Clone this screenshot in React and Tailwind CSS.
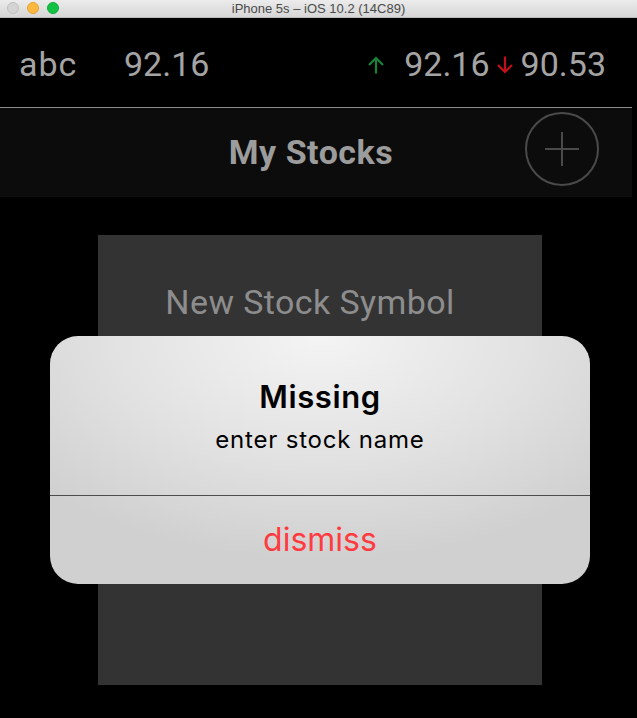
import React from "react";

const ArrowUp = ({ color }) => (
  <svg width="18" height="18" viewBox="0 0 18 18" fill="none" stroke={color} strokeWidth="2.2">
    <path d="M9 17.5V2" />
    <path d="M2 9l7-7 7 7" />
  </svg>
);

const ArrowDown = ({ color }) => (
  <svg width="18" height="18" viewBox="0 0 18 18" fill="none" stroke={color} strokeWidth="2.2">
    <path d="M9 0.5V16" />
    <path d="M2 9l7 7 7-7" />
  </svg>
);

export default function App() {
  return (
    <div className="relative w-[637px] h-[718px] bg-black overflow-hidden font-['Roboto',sans-serif]">
      {/* simulator title bar */}
      <div className="relative h-[18px] flex items-center justify-center bg-gradient-to-b from-[#ececec] to-[#d6d6d6] border-b border-[#b9b9b9]">
        <div className="absolute left-[7px] top-[2px] flex gap-[8px]">
          <span className="w-[12px] h-[12px] rounded-full bg-[#d4d4d4] border border-[#c0c0c0]" />
          <span className="w-[12px] h-[12px] rounded-full bg-[#fdb93f] border border-[#e4a233]" />
          <span className="w-[12px] h-[12px] rounded-full bg-[#13c244] border border-[#10a93a]" />
        </div>
        <span className="text-[13px] leading-none text-[#4a4a4a] font-['Liberation_Sans',sans-serif]">
          iPhone 5s – iOS 10.2 (14C89)
        </span>
      </div>

      {/* stock row */}
      <div className="h-[89px] flex items-center pt-[4px] pl-[19px] pr-[31px] text-[34px] text-[#a4a4a4]">
        <span className="w-[105px] tracking-[1px]">abc</span>
        <span>92.16</span>
        <div className="ml-auto flex items-center">
          <ArrowUp color="#17823c" />
          <span className="ml-[19px]">92.16</span>
          <span className="ml-[6px] mr-[7px]"><ArrowDown color="#c20f1e" /></span>
          <span>90.53</span>
        </div>
      </div>
      <div className="w-[632px] h-px bg-[#8a8a8a]" />

      {/* header */}
      <div className="relative w-[632px] h-[89px] bg-[#0c0c0c] flex items-center justify-center">
        <span className="text-[34px] tracking-[0.5px] font-bold text-[#9c9c9c] -ml-[10px]">My Stocks</span>
        <div className="absolute left-[525px] top-[4px] w-[74px] h-[74px] rounded-full border-2 border-[#4a4a4a] flex items-center justify-center">
          <svg width="34" height="34" viewBox="0 0 34 34" stroke="#4a4a4a" strokeWidth="2">
            <path d="M0 17h34M17 0v34" />
          </svg>
        </div>
      </div>

      {/* add stock panel */}
      <div className="absolute left-[98px] top-[235px] w-[444px] h-[450px] bg-[#333333] flex justify-center">
        <span className="mt-[47px] -ml-[20px] text-[34px] tracking-[0.4px] leading-[40px] text-[#8d8d8d] h-fit">New Stock Symbol</span>
      </div>

      {/* alert */}
      <div className="absolute left-[50px] top-[336px] w-[540px] h-[248px] rounded-[28px] overflow-hidden flex flex-col font-['Inter',sans-serif] bg-[radial-gradient(ellipse_70%_90%_at_50%_0%,#f4f4f4_0%,#e2e2e2_55%,#d0d0d0_100%)]">
        <div className="h-[160px] flex flex-col items-center border-b border-[#4d4d4d]">
          <span className="mt-[42px] text-[31px] tracking-[0.6px] leading-[38px] font-semibold text-black">Missing</span>
          <span className="mt-[9px] text-[24px] tracking-[0.8px] leading-[30px] text-black">enter stock name</span>
        </div>
        <div className="flex-1 flex items-center justify-center">
          <span className="text-[32px] leading-[38px] text-[#ff3b3f]">dismiss</span>
        </div>
      </div>
    </div>
  );
}
